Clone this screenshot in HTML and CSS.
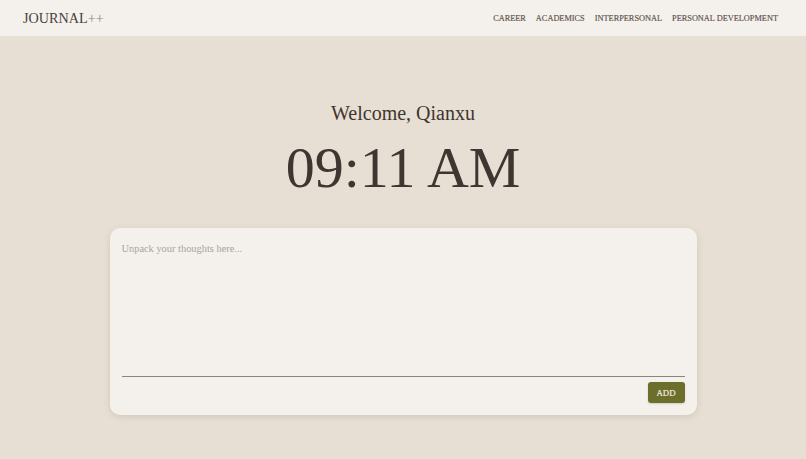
FILE: index.html
```html
<!DOCTYPE html>
<html lang="en">
<head>
<meta charset="utf-8">
<title>Journal++</title>
<link rel="stylesheet" href="styles.css">
</head>
<body>
<header class="topbar">
  <div class="logo">JOURNAL<span class="plus">++</span></div>
  <nav class="nav">
    <a href="#">CAREER</a>
    <a href="#">ACADEMICS</a>
    <a href="#">INTERPERSONAL</a>
    <a href="#">PERSONAL DEVELOPMENT</a>
  </nav>
</header>
<main class="main">
  <h2 class="welcome">Welcome, Qianxu</h2>
  <h1 class="clock">09:11 AM</h1>
  <section class="card">
    <textarea class="entry" placeholder="Unpack your thoughts here..."></textarea>
    <div class="actions">
      <button class="add">ADD</button>
    </div>
  </section>
</main>
</body>
</html>
```
FILE: styles.css
```css
* { box-sizing: border-box; }
html, body { margin: 0; height: 100%; }
body {
  background: #e7dfd3;
  font-family: "Liberation Serif", "Times New Roman", serif;
  color: #3f3531;
}
.topbar {
  height: 36px;
  background: #f4f1ec;
  display: flex;
  align-items: center;
  justify-content: space-between;
  padding: 0 28px 0 23px;
}
.logo {
  font-size: 14.2px;
  color: #4a403c;
  padding-top: 1px;
}
.logo .plus { color: #8c827c; }
.nav {
  display: flex;
  gap: 10px;
  padding-top: 1px;
}
.nav a {
  font-size: 8.3px;
  color: #5a504b;
  text-decoration: none;
  -webkit-text-stroke: 0.15px #5a504b;
}
.main {
  display: flex;
  flex-direction: column;
  align-items: center;
  padding-top: 65px;
}
.welcome {
  margin: 0;
  font-weight: normal;
  font-size: 20px;
  line-height: 24px;
  color: #3f3531;
}
.clock {
  margin: 8px 0 0;
  font-weight: normal;
  font-size: 58px;
  line-height: 70px;
  color: #3f3531;
}
.card {
  margin-top: 25px;
  width: 587px;
  background: #f4f1ec;
  border-radius: 10px;
  box-shadow: 0 2px 6px rgba(120, 100, 80, 0.18);
  padding: 13px 12px 12px;
  display: flex;
  flex-direction: column;
}
.entry {
  width: 100%;
  height: 136px;
  border: none;
  border-bottom: 1px solid #8a8580;
  background: transparent;
  resize: none;
  outline: none;
  padding: 2px 0 0;
  font-family: "Liberation Serif", "Times New Roman", serif;
  font-size: 10.4px;
  color: #3f3531;
}
.entry::placeholder { color: #aaa39c; }
.actions {
  display: flex;
  justify-content: flex-end;
  margin-top: 5px;
}
.add {
  width: 37px;
  height: 21px;
  border: none;
  border-radius: 3px;
  background: #6c6e2b;
  color: #f1efe4;
  font-family: "Liberation Serif", "Times New Roman", serif;
  font-size: 8.8px;
  -webkit-text-stroke: 0.2px #f1efe4;
  padding: 0;
  box-shadow: 0 1px 2px rgba(0,0,0,0.15);
}
```
